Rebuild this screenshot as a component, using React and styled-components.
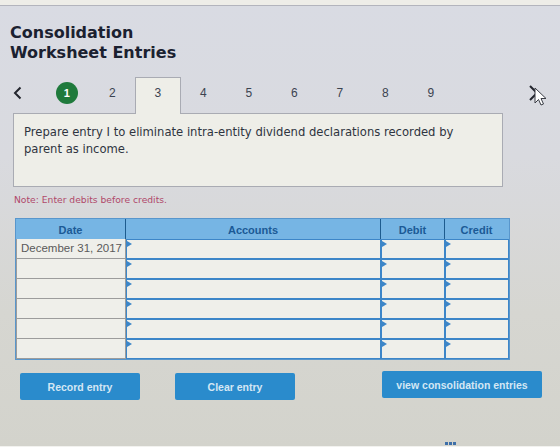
import React from 'react';
import styled, { createGlobalStyle } from 'styled-components';

const GlobalStyle = createGlobalStyle`
  html, body {
    margin: 0;
    padding: 0;
  }
  body {
    font-family: "DejaVu Sans", Verdana, sans-serif;
  }
`;

const Page = styled.div`
  position: relative;
  width: 560px;
  height: 447px;
  overflow: hidden;
  background: linear-gradient(180deg, #d9dbe3 0%, #d9dadf 35%, #d6d6d1 70%, #d3d3cc 100%);
`;

const TopStrip = styled.div`
  height: 5px;
  background: #eeede8;
  border-bottom: 1px solid #b3b4bd;
`;

const Title = styled.h1`
  margin: 0;
  padding: 17px 10px 0;
  font-family: "DejaVu Sans", Verdana, sans-serif;
  font-weight: bold;
  font-size: 16px;
  line-height: 20px;
  color: #1b2130;
`;

const NavRow = styled.div`
  display: flex;
  align-items: stretch;
  height: 36px;
  margin-top: 14px;
  padding-left: 13px;
  position: relative;
  z-index: 1;
`;

const Chevron = styled.div`
  width: 12px;
  margin-right: 19px;
  padding-top: 9px;
  svg {
    display: block;
  }
`;

const Step = styled.div`
  width: 45.5px;
  box-sizing: border-box;
  display: flex;
  justify-content: center;
  padding-top: 8px;
  font-family: "Liberation Sans", Arial, sans-serif;
  font-size: 12px;
  line-height: 14px;
  color: #3c4350;
  background: ${({ active }) => (active ? '#eeeee8' : 'transparent')};
  border: 1px solid ${({ active }) => (active ? '#a9abb3' : 'transparent')};
  border-bottom: none;
  margin-bottom: ${({ active }) => (active ? '-1px' : '0')};
`;

const Done = styled.span`
  display: inline-flex;
  align-items: center;
  justify-content: center;
  width: 22px;
  height: 22px;
  margin-top: -4px;
  border-radius: 50%;
  background: #1f7a3c;
  color: #ffffff;
  font-weight: bold;
  font-size: 11px;
`;

const NextArrow = styled.div`
  position: absolute;
  right: 10px;
  top: 6px;
`;

const Panel = styled.div`
  margin: 0 57px 0 13px;
  height: 74px;
  box-sizing: border-box;
  padding: 10px 10px;
  background: #eeeee8;
  border: 1px solid #a9abb3;
  font-size: 11.6px;
  line-height: 17px;
  color: #2e3440;
`;

const Note = styled.p`
  margin: 7px 0 0 14px;
  font-size: 9.2px;
  line-height: 12px;
  color: #b0486a;
`;

const Sheet = styled.div`
  display: grid;
  grid-template-columns: 110px 255px 64px 64px;
  grid-auto-rows: 20px;
  width: 493px;
  margin: 12px 0 0 15px;
  border: 1px solid #5896cc;
  background: #ecece7;
`;

const Head = styled.div`
  height: 22px;
  display: flex;
  align-items: center;
  justify-content: center;
  background: #76b5e4;
  border-right: 1px solid ${({ last }) => (last ? 'transparent' : '#1d5b8e')};
  border-bottom: 1px solid #2f74b4;
  font-family: "Liberation Sans", Arial, sans-serif;
  font-weight: bold;
  font-size: 11px;
  color: #1b5a96;
`;

const DateCell = styled.div`
  box-sizing: border-box;
  border: 1px solid #9c9c9c;
  border-top: none;
  background: #efefea;
  padding-left: 4px;
  font-family: "Liberation Sans", Arial, sans-serif;
  font-size: 11.5px;
  line-height: 19px;
  color: #5a5a5a;
`;

const InputCell = styled.div`
  position: relative;
  box-sizing: border-box;
  border: 1px solid #3d86c8;
  background: #efefea;
  &::before {
    content: '';
    position: absolute;
    left: 0;
    top: 1px;
    border-left: 5px solid #3d86c8;
    border-top: 3px solid transparent;
    border-bottom: 3px solid transparent;
  }
`;

const Actions = styled.div`
  display: flex;
  align-items: flex-start;
  margin-top: 13px;
  padding: 0 18px 0 20px;
`;

const Button = styled.button`
  width: ${({ wide }) => (wide ? '160px' : '120px')};
  height: 27px;
  margin-right: ${({ wide }) => (wide ? '0' : '35px')};
  margin-left: ${({ wide }) => (wide ? 'auto' : '0')};
  margin-top: ${({ wide }) => (wide ? '-2px' : '0')};
  border: none;
  border-radius: 2px;
  background: #2a8bcc;
  color: #d4e7f4;
  font-family: "Liberation Sans", Arial, sans-serif;
  font-weight: bold;
  font-size: 10.5px;
  padding: 0;
`;

const Dots = styled.div`
  position: absolute;
  left: 445px;
  bottom: 2px;
  display: flex;
  gap: 1px;
  span {
    width: 3px;
    height: 3px;
    background: #3e6fa8;
  }
`;

const BottomEdge = styled.div`
  position: absolute;
  left: 0;
  right: 0;
  bottom: 0;
  height: 1px;
  background: #f2f2ef;
`;

const steps = [1, 2, 3, 4, 5, 6, 7, 8, 9];
const rows = [0, 1, 2, 3, 4, 5];

export default function App() {
  return (
    <Page>
      <GlobalStyle />
      <TopStrip />
      <Title>
        Consolidation
        <br />
        Worksheet Entries
      </Title>
      <NavRow>
        <Chevron>
          <svg width="10" height="14" viewBox="0 0 10 14">
            <path d="M7.5 1.5 L2 7 L7.5 12.5" fill="none" stroke="#23262e" strokeWidth="2" />
          </svg>
        </Chevron>
        {steps.map(n => (
          <Step key={n} active={n === 3}>
            {n === 1 ? <Done>1</Done> : n}
          </Step>
        ))}
        <NextArrow>
          <svg width="22" height="24" viewBox="0 0 22 24">
            <path d="M2 3 L9 10 L2 17" fill="none" stroke="#23262e" strokeWidth="2" />
            <path
              d="M7 5 L7 20 L10.5 16.5 L13 22 L15.5 21 L13 15.5 L18 15.5 Z"
              fill="#ffffff"
              stroke="#3a3d45"
              strokeWidth="1"
              strokeLinejoin="round"
            />
          </svg>
        </NextArrow>
      </NavRow>
      <Panel>
        Prepare entry I to eliminate intra-entity dividend declarations recorded by
        <br />
        parent as income.
      </Panel>
      <Note>Note: Enter debits before credits.</Note>
      <Sheet>
        <Head>Date</Head>
        <Head>Accounts</Head>
        <Head>Debit</Head>
        <Head last>Credit</Head>
        {rows.map(r => (
          <React.Fragment key={r}>
            <DateCell>{r === 0 ? 'December 31, 2017' : ''}</DateCell>
            <InputCell />
            <InputCell />
            <InputCell />
          </React.Fragment>
        ))}
      </Sheet>
      <Actions>
        <Button>Record entry</Button>
        <Button>Clear entry</Button>
        <Button wide>view consolidation entries</Button>
      </Actions>
      <Dots>
        <span />
        <span />
        <span />
      </Dots>
      <BottomEdge />
    </Page>
  );
}
